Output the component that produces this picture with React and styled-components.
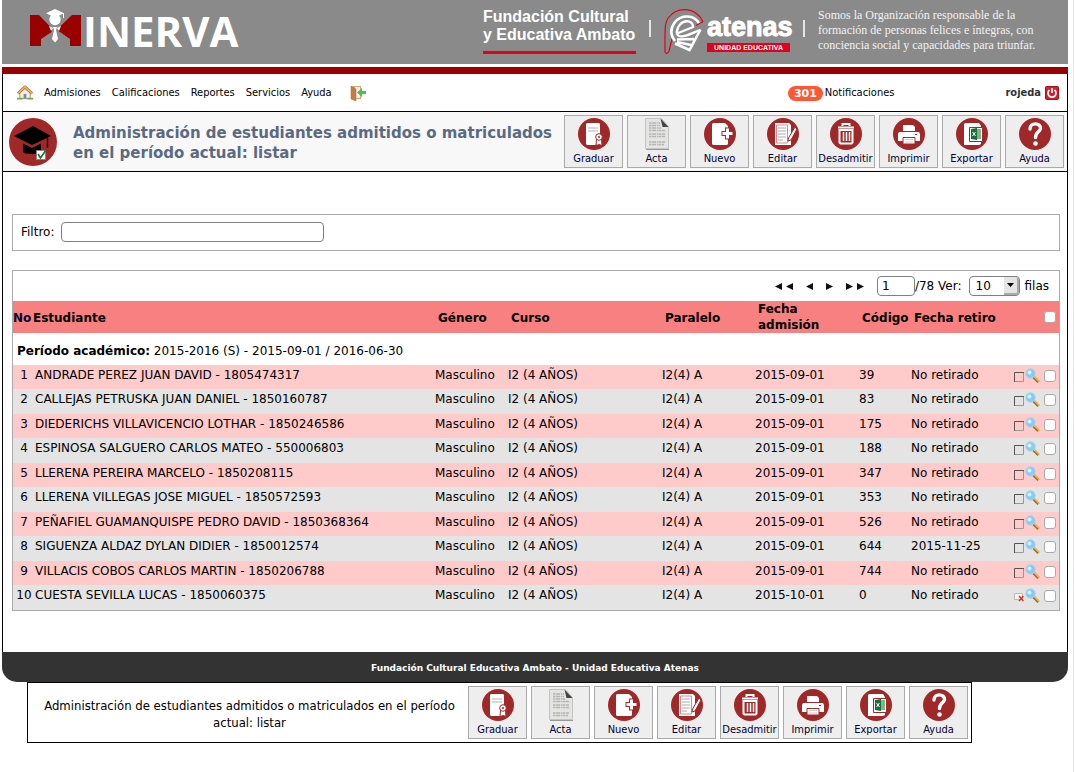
import React from "react";
import styled, { createGlobalStyle } from "styled-components";

const sans = `"DejaVu Sans", Verdana, sans-serif`;
const condensed = `"DejaVu Sans Condensed", Tahoma, sans-serif`;
const grotesk = `"Liberation Sans", Arial, sans-serif`;
const brick = "#a02829";

const GlobalStyle = createGlobalStyle`
  *, *::before, *::after { box-sizing: border-box; }
  body { margin: 0; background: #fff; color: #000; font: 12px/16px ${sans}; }
  button, input, select { font: inherit; color: inherit; margin: 0; }
  a { color: inherit; text-decoration: none; }
  svg { display: block; flex: none; }
`;

const Page = styled.div`
  min-height: 100vh;
  margin-right: 1px;
  padding: 0 5px 0 2px;
  border-right: 1px solid #e6e6e6;
`;

/* ---------- banner ---------- */
const Banner = styled.header`
  display: flex;
  align-items: flex-start;
  height: 64px;
  padding: 8px 0 0 27px;
  background: #8a8a8a;
  color: #fff;
`;
const Brand = styled.div`
  display: flex;
  font: 700 42px/46px "Open Sans", sans-serif;
  gap: 1px;
`;
const Sponsors = styled.div`
  display: flex;
  align-items: flex-start;
  margin-left: auto;
`;
const Foundation = styled.div`
  width: 153px;
  height: 46px;
  border-bottom: 3px solid #e2001a;
  font: 700 16px/18px ${grotesk};
  white-space: nowrap;
`;
const Divider = styled.span`
  width: 2px;
  height: 17px;
  margin: 12px 13px 0;
  background: #e6e6e6;
`;
const Atenas = styled.div`
  display: flex;
  gap: 3px;
`;
const AtenasName = styled.div`
  width: 83px;
  padding-top: 4px;
  font: 700 27px/31px ${grotesk};
  -webkit-text-stroke: 1px #fff;
`;
const AtenasTag = styled.div`
  height: 9px;
  background: #e2001a;
  font: 700 7px/9px ${grotesk};
  text-align: center;
  white-space: nowrap;
  -webkit-text-stroke: 0;
`;
const Motto = styled.p`
  width: 250px;
  margin: 0;
  color: #f2f2f2;
  font: 12px/15px "Liberation Serif", serif;
`;

/* ---------- frame ---------- */
const Frame = styled.div`
  margin-top: 3px;
  border-top: 7px solid #990000;
`;
const FrameBody = styled.div`
  border: solid #000;
  border-width: 0 1px;
`;
const MenuBar = styled.nav`
  display: flex;
  align-items: center;
  height: 38px;
  padding: 1px 8px 0 14px;
  border-bottom: 1px solid #000;
  font: 11px/16px ${condensed};
`;
const MenuLinks = styled.div`
  display: flex;
  align-items: center;
  gap: 11px;
`;
const ExitLink = styled.a`
  margin-left: 7px;
`;
const Notices = styled.a`
  display: flex;
  align-items: center;
  gap: 2px;
  margin-left: auto;
`;
const Count = styled.span`
  width: 35px;
  border-radius: 8px;
  background: #ff5733;
  color: #fff;
  font: 700 11px/15px ${sans};
  text-align: center;
`;
const User = styled.div`
  display: flex;
  align-items: center;
  gap: 4px;
  margin-left: 111px;
  color: #333;
  font: 700 11px/16px ${condensed};
`;

const TitleBar = styled.div`
  display: flex;
  align-items: center;
  height: 60px;
  padding: 0 3px 0 6px;
  border-bottom: 1px solid #000;
  background: #f8f8f8;
`;
const Title = styled.h1`
  flex: 1;
  margin: 0 10px 0 16px;
  padding-top: 2px;
  color: #5b6a82;
  font: 700 15px/20px ${sans};
`;
const Tools = styled.div`
  display: flex;
  gap: 4px;
`;
const ToolButton = styled.button`
  display: flex;
  flex-direction: column;
  align-items: center;
  gap: 2px;
  width: 59px;
  height: 53px;
  padding: 2px 0 0;
  border: 1px solid #aaa;
  background: #eee;
  color: #000033;
  font: 11px/14px ${condensed};
  white-space: nowrap;
`;

/* ---------- content ---------- */
const Content = styled.main`
  padding: 42px 7px 41px 9px;
`;
const FilterBox = styled.div`
  display: flex;
  align-items: center;
  gap: 7px;
  height: 37px;
  margin-bottom: 19px;
  padding: 0 8px 2px;
  border: 1px solid #aaa;
`;
const TextInput = styled.input`
  width: ${(p) => p.$width};
  height: 20px;
  padding: 0 4px;
  border: 1px solid #808080;
  border-radius: 4px;
  background: #fff;
`;
const ListBox = styled.section`
  border: 1px solid #aaa;
`;
const Pager = styled.div`
  display: flex;
  align-items: center;
  justify-content: flex-end;
  height: 30px;
  padding-right: 10px;
`;
const PageButtons = styled.div`
  display: flex;
  gap: 13px;
  margin-right: 13px;
`;
const PageButton = styled.button`
  display: flex;
  gap: 4px;
  padding: 0;
  border: 0;
  background: none;
`;
const SelectWrap = styled.span`
  position: relative;
  margin: 0 5px 0 7px;
`;
const RowsSelect = styled.select`
  appearance: none;
  display: block;
  width: 51px;
  height: 20px;
  padding: 0 6px;
  border: 1px solid #808080;
  border-radius: 4px;
  background: #fff;
`;
const SelectArrow = styled.span`
  position: absolute;
  top: 1px;
  right: 1px;
  display: grid;
  place-items: center;
  width: 15px;
  height: 18px;
  border: solid #aaa;
  border-width: 0 2px 2px 0;
  border-radius: 0 3px 3px 0;
  background: #e4e4e4;
  pointer-events: none;
`;

const Table = styled.table`
  width: 100%;
  table-layout: fixed;
  border-collapse: collapse;
`;
const Col = styled.col`
  width: ${(p) => p.$width};
`;
const HeadRow = styled.tr`
  height: 32px;
  background: #f88080;
`;
const Th = styled.th`
  padding: ${(p) => (p.$lines === 2 ? "0" : "2px")} 0 0 ${(p) => (p.$tight ? "0" : "5px")};
  color: ${(p) => (p.$navy ? "#000033" : "#000")};
  text-align: left;
  vertical-align: middle;
  white-space: nowrap;
`;
const PeriodRow = styled.tr`
  height: 32px;
`;
const PeriodCell = styled.td`
  padding: 4px 4px 0;
`;
const Row = styled.tr`
  height: 24px;
  background: #fecaca;
  &:nth-child(odd) {
    height: 25px;
    background: #e4e4e4;
  }
`;
const Td = styled.td`
  padding: 2px 0 0 2px;
  text-align: ${(p) => (p.$center ? "center" : "left")};
  vertical-align: top;
  white-space: nowrap;
`;
const Actions = styled.div`
  display: flex;
  align-items: center;
  justify-content: flex-end;
  gap: ${(p) => (p.$header ? "0" : "1px")};
  padding-right: 3px;
`;
const Check = styled.input.attrs({ type: "checkbox" })`
  appearance: none;
  width: 12px;
  height: 12px;
  margin: 0 0 0 3px;
  border: 1px solid #aaa;
  border-radius: 3px;
  background: #fff;
`;
const IconLink = styled.a`
  display: block;
`;

/* ---------- footer ---------- */
const Footer = styled.footer`
  height: 30px;
  padding-top: 1px;
  border-radius: 0 0 15px 15px;
  background: #333;
  color: #fff;
  font: 700 9px/30px ${sans};
  text-align: center;
`;
const BottomBar = styled.div`
  display: flex;
  align-items: center;
  height: 61px;
  margin: 0 96px 0 25px;
  padding: 0 3px;
  border: 1px solid #000;
`;
const BottomTitle = styled.div`
  flex: 1;
  padding: 2px 8px 0;
  font: 13px/17px ${condensed};
  text-align: center;
`;

/* ---------- drawings ---------- */
const MinervaMark = () => (
  <svg width="53" height="40" viewBox="0 0 53 40" aria-hidden="true">
    <path d="M1 7h9l12.500 13v4L12 31v7H1zM52 7h-9L29.500 20v3L41 31v7h11z" fill="#990000" />
    <path d="M17 5.200 26 1l9 4.200L26 9.500z" fill="#fff" />
    <circle cx="26" cy="11.500" r="5.700" fill="#fff" />
    <path d="M34.500 5v5" stroke="#fff" />
    <path d="m20 18 4 2-2 3zM32 18l-4 2 2 3z" fill="#fff" />
    <path d="M24 19h4l-1 3 2 9-3 3.500-3-3.500 2-9z" fill="#fff" />
  </svg>
);

const Helmet = () => (
  <svg width="40" height="47" viewBox="0 0 40 47" fill="none" aria-hidden="true">
    <path d="M39 13.500C31-2 13-1 5 9 0 15 1 24 1 43c0 3.500 3 3 4 0l3-12M39 13.500l-7 4" stroke="#e2001a" strokeWidth="1.200" />
    <path d="M35 15C30 7 18 6 11 14c-6 8-4 14 0 19" stroke="#fff" strokeWidth="2.600" />
    <path d="M13 25.500 29 19c0-6-8-8-13-2.500-4 4.500-4 10-1 11.500 5 2 13-3 21-6" stroke="#fff" strokeWidth="2.400" />
    <path d="M36.500 21.500 25.500 42 11 35.500M13 34l14 3M13 31.500l17-.5" stroke="#fff" strokeWidth="2.600" />
  </svg>
);

const HomeIcon = () => (
  <svg width="16" height="16" viewBox="0 0 17 16" aria-hidden="true">
    <path d="M3 8 8.500 3 14 8v6H3z" fill="#f4efe4" stroke="#999" />
    <path d="M1 8.500 8.500 1.500 16 8.500" fill="none" stroke="#b36b2a" strokeWidth="3" strokeLinejoin="round" />
    <path d="M1 8.500 8.500 1.500 16 8.500" fill="none" stroke="#f0b565" strokeWidth="1.600" />
    <path d="M7 9h3v5H7z" fill="#7c8997" />
    <path d="M0 13h6v2H0zM11 13h6v2h-6z" fill="#6fae45" />
  </svg>
);

const DoorIcon = () => (
  <svg width="17" height="17" viewBox="0 0 17 17" aria-hidden="true">
    <path d="M1 1h10v13H1z" fill="#d9a67c" />
    <path d="M5 2h5v11H5z" fill="#f2f2f2" />
    <path d="m1 1 5 3v12l-5-2z" fill="#c97c42" stroke="#b56c38" strokeWidth=".5" />
    <path d="M7 7.500 12 3v3h4v3h-4v3z" fill="#4cc04a" />
  </svg>
);

const PowerIcon = () => (
  <svg width="14" height="14" viewBox="0 0 14 14" fill="none" aria-hidden="true">
    <rect x=".5" y=".5" width="13" height="13" rx="1" fill="#d31f2c" stroke="#a80f1a" />
    <path d="M4.500 4a4 4 0 1 0 5 0M7 2v5" stroke="#fff" strokeWidth="1.700" />
  </svg>
);

const StudentIcon = () => (
  <svg width="48" height="48" viewBox="0 0 48 48" aria-hidden="true">
    <circle cx="24" cy="24" r="24" fill={brick} />
    <path d="M5 18 24 8l18 10-19 9z" fill="#000" />
    <path d="M14 25.500 23 30l9-4.500V36H23c-5 0-9-1-9-2z" fill="#000" />
    <path d="M38.500 20v10" stroke="#300" strokeWidth="1.500" />
    <path d="M27.500 32.500h9v9h-9z" fill="#fff" stroke="#888" />
    <path d="m29 36 2.500 4 5.500-8" fill="none" stroke="#16753a" strokeWidth="1.700" />
  </svg>
);

const toolArt = {
  Graduar: (
    <>
      <path d="M9 5h12l1 1v20l-1 1H9l-1-1V6z" fill="#fff" />
      <path d="M10 10h10M10 13h10" stroke="#ccc" strokeWidth="1.400" />
      <path d="m18.500 21-.5 6.500 3-1 3 1-.5-6.500z" fill="#fff" stroke={brick} />
      <circle cx="21" cy="19" r="3.300" fill="#fff" stroke={brick} />
      <circle cx="21" cy="19" r="1" fill={brick} />
    </>
  ),
  Nuevo: (
    <>
      <path d="M9 5h12l3 3v18l-1 1H9l-1-1V6z" fill="#fff" />
      <path d="M23.500 9.500v12M17.500 15.500h12" stroke={brick} strokeWidth="5" />
      <path d="M23.500 10.500v10M18.500 15.500h10" stroke="#fff" strokeWidth="3" />
    </>
  ),
  Editar: (
    <>
      <path d="M8 5h14l2 2v20H8z" fill="#fff" />
      <path d="M9.500 7h11v18h-11z" fill="none" stroke="#d88" />
      <path d="M11 10h8M11 13h8M11 16h8M11 19h8M11 22h5" stroke="#aaa" />
      <path d="m28 9-6.500 11-.5 3 3-1L30 11z" fill="#fff" stroke={brick} />
    </>
  ),
  Desadmitir: (
    <g fill="none" stroke="#fff" strokeWidth="2">
      <path d="M12.500 8V6h7v2M8 9.500h16" />
      <path d="M9.500 12h13v12.500l-1 1h-11l-1-1z" />
      <path d="M13.500 14v9M16.500 14v9M19.500 14v9" strokeWidth="1.500" />
    </g>
  ),
  Imprimir: (
    <>
      <path d="M10 7h10l2 2v4H10z" fill="#fff" />
      <path d="M6 14h20l1 2v7H5v-7z" fill="#fff" />
      <path d="M10 19.500h12V26H10z" fill="#fff" stroke={brick} />
      <path d="M12 21.500h8M12 24h8" stroke="#ccc" />
      <path d="M22 16.500h2" stroke={brick} />
    </>
  ),
  Exportar: (
    <>
      <path d="M9 5h14l2 3v18l-2 1H8V6z" fill="#fff" />
      <path d="M13.500 9.500h13v14h-13z" fill="#fff" stroke={brick} />
      <path d="M20 11h5v10h-5z" fill="#7db58c" />
      <path d="m15 11 6-1v12l-6-1z" fill="#17703a" />
      <path d="m16.500 14 3 4M19.500 14l-3 4" stroke="#fff" />
    </>
  ),
  Ayuda: (
    <>
      <path d="M11 11c0-7 11-6.500 10.500-.500C21 14 16.500 14 16.500 19.500" fill="none" stroke="#fff" strokeWidth="3.400" strokeLinecap="round" />
      <circle cx="16.500" cy="25.500" r="2.300" fill="#fff" />
    </>
  ),
};

const PaperIcon = () => (
  <svg width="32" height="32" viewBox="0 0 32 32" aria-hidden="true">
    <path d="M4.500.500h16l7 8v22h-23z" fill="#e4e4e2" stroke="#c4c4c4" />
    <path d="M5 31.500h23" stroke="#999" />
    <path d="M19.500.500l8 8.500h-6z" fill="#444" />
    <path
      d="M8 5h11M8 7.500h11M8 10h12M8 12.500h16M8 16h16M8 18.500h16M8 24h16M8 26.500h15"
      stroke="#b4b4b4"
      strokeWidth="1.400"
      strokeDasharray="2.500 .6 4 .8 1.500 .5"
    />
  </svg>
);

const ToolIcon = ({ name }) =>
  name === "Acta" ? (
    <PaperIcon />
  ) : (
    <svg width="32" height="32" viewBox="0 0 32 32" aria-hidden="true">
      <circle cx="16" cy="16" r="16" fill={brick} />
      {toolArt[name]}
    </svg>
  );

const Triangle = ({ back }) => (
  <svg width="7" height="7" viewBox="0 0 7 7" aria-hidden="true">
    <path d={back ? "M7 0v7L0 3.500z" : "M0 0v7l7-3.500z"} fill="#111" />
  </svg>
);

const StateIcon = ({ removed }) => (
  <svg width="10" height="14" viewBox="0 0 10 14" fill="none" aria-hidden="true">
    {removed ? (
      <>
        <path d="M.5 4.500h8v6h-8z" fill="#f4f4f4" stroke="#bbb" />
        <path d="m5 7 4.500 5M9.500 7 5 12" stroke="#e03020" strokeWidth="1.500" />
      </>
    ) : (
      <>
        <path d="M9.500 3v9.500H0" stroke="#999" />
        <path d="M.5 13V3.500H10" stroke="#555" />
      </>
    )}
  </svg>
);

const LensIcon = () => (
  <svg width="15" height="17" viewBox="0 0 15 17" fill="none" aria-hidden="true">
    <path d="m8.500 10 5 5" stroke="#99712c" strokeWidth="3" />
    <path d="m9 9.500 5 5" stroke="#f3b74f" strokeWidth="1.300" />
    <circle cx="5.500" cy="6.500" r="4.700" fill="#7fcdfa" stroke="#b5cfe4" />
    <circle cx="4.500" cy="5.500" r="2" fill="#d5f2ff" />
  </svg>
);

/* ---------- data ---------- */
const tools = ["Graduar", "Acta", "Nuevo", "Editar", "Desadmitir", "Imprimir", "Exportar", "Ayuda"];
const menu = ["Admisiones", "Calificaciones", "Reportes", "Servicios", "Ayuda"];
const widths = ["20px", "auto", "73px", "154px", "93px", "104px", "52px", "102px", "48px"];
const students = [
  ["ANDRADE PEREZ JUAN DAVID - 1805474317", "2015-09-01", "39", "No retirado"],
  ["CALLEJAS PETRUSKA JUAN DANIEL - 1850160787", "2015-09-01", "83", "No retirado"],
  ["DIEDERICHS VILLAVICENCIO LOTHAR - 1850246586", "2015-09-01", "175", "No retirado"],
  ["ESPINOSA SALGUERO CARLOS MATEO - 550006803", "2015-09-01", "188", "No retirado"],
  ["LLERENA PEREIRA MARCELO - 1850208115", "2015-09-01", "347", "No retirado"],
  ["LLERENA VILLEGAS JOSE MIGUEL - 1850572593", "2015-09-01", "353", "No retirado"],
  ["PEÑAFIEL GUAMANQUISPE PEDRO DAVID - 1850368364", "2015-09-01", "526", "No retirado"],
  ["SIGUENZA ALDAZ DYLAN DIDIER - 1850012574", "2015-09-01", "644", "2015-11-25"],
  ["VILLACIS COBOS CARLOS MARTIN - 1850206788", "2015-09-01", "744", "No retirado"],
  ["CUESTA SEVILLA LUCAS - 1850060375", "2015-10-01", "0", "No retirado"],
];

const Toolbar = () => (
  <Tools>
    {tools.map((name) => (
      <ToolButton key={name} type="button">
        <ToolIcon name={name} />
        {name}
      </ToolButton>
    ))}
  </Tools>
);

const StudentTable = () => (
  <Table>
    <colgroup>
      {widths.map((w, i) => (
        <Col key={i} $width={w} />
      ))}
    </colgroup>
    <thead>
      <HeadRow>
        <Th $tight $navy>No</Th>
        <Th $tight>Estudiante</Th>
        <Th>Género</Th>
        <Th>Curso</Th>
        <Th>Paralelo</Th>
        <Th $lines={2}>
          Fecha
          <br />
          admisión
        </Th>
        <Th>Código</Th>
        <Th>Fecha retiro</Th>
        <Th $lines={2}>
          <Actions $header>
            <Check aria-label="Seleccionar todos" />
          </Actions>
        </Th>
      </HeadRow>
    </thead>
    <tbody>
      <PeriodRow>
        <PeriodCell colSpan={9}>
          <b>Período académico:</b> 2015-2016 (S) - 2015-09-01 / 2016-06-30
        </PeriodCell>
      </PeriodRow>
      {students.map(([name, admitted, code, left], i) => (
        <Row key={name}>
          <Td $center>{i + 1}</Td>
          <Td>{name}</Td>
          <Td>Masculino</Td>
          <Td>I2 (4 AÑOS)</Td>
          <Td>I2(4) A</Td>
          <Td>{admitted}</Td>
          <Td>{code}</Td>
          <Td>{left}</Td>
          <Td>
            <Actions>
              <StateIcon removed={code === "0"} />
              <IconLink href="#ver" aria-label={`Ver ${name}`}>
                <LensIcon />
              </IconLink>
              <Check aria-label={`Seleccionar ${name}`} />
            </Actions>
          </Td>
        </Row>
      ))}
    </tbody>
  </Table>
);

export default function App() {
  return (
    <Page>
      <GlobalStyle />
      <Banner>
        <Brand>
          <MinervaMark />
          INERVA
        </Brand>
        <Sponsors>
          <Foundation>
            Fundación Cultural
            <br />y Educativa Ambato
          </Foundation>
          <Divider />
          <Atenas>
            <Helmet />
            <AtenasName>
              atenas
              <AtenasTag>UNIDAD EDUCATIVA</AtenasTag>
            </AtenasName>
          </Atenas>
          <Divider />
          <Motto>
            Somos la Organización responsable de la
            <br />
            formación de personas felices e íntegras, con
            <br />
            conciencia social y capacidades para triunfar.
          </Motto>
        </Sponsors>
      </Banner>

      <Frame>
        <FrameBody>
          <MenuBar>
            <MenuLinks>
              <a href="#inicio" aria-label="Inicio">
                <HomeIcon />
              </a>
              {menu.map((item) => (
                <a key={item} href={`#${item}`}>
                  {item}
                </a>
              ))}
              <ExitLink href="#salir" aria-label="Salir">
                <DoorIcon />
              </ExitLink>
            </MenuLinks>
            <Notices href="#notificaciones">
              <Count>301</Count>
              Notificaciones
            </Notices>
            <User>
              rojeda
              <a href="#cerrar" aria-label="Cerrar sesión">
                <PowerIcon />
              </a>
            </User>
          </MenuBar>

          <TitleBar>
            <StudentIcon />
            <Title>Administración de estudiantes admitidos o matriculados en el período actual: listar</Title>
            <Toolbar />
          </TitleBar>

          <Content>
            <FilterBox>
              <label htmlFor="filtro">Filtro:</label>
              <TextInput id="filtro" type="text" $width="263px" />
            </FilterBox>

            <ListBox>
              <Pager>
                <PageButtons>
                  <PageButton type="button" aria-label="Primera página">
                    <Triangle back />
                    <Triangle back />
                  </PageButton>
                  <PageButton type="button" aria-label="Página anterior">
                    <Triangle back />
                  </PageButton>
                  <PageButton type="button" aria-label="Página siguiente">
                    <Triangle />
                  </PageButton>
                  <PageButton type="button" aria-label="Última página">
                    <Triangle />
                    <Triangle />
                  </PageButton>
                </PageButtons>
                <TextInput type="text" aria-label="Página" defaultValue="1" $width="38px" />
                <label htmlFor="filas">/78 Ver:</label>
                <SelectWrap>
                  <RowsSelect id="filas" defaultValue="10">
                    <option>10</option>
                    <option>20</option>
                    <option>50</option>
                  </RowsSelect>
                  <SelectArrow>
                    <svg width="7" height="4" viewBox="0 0 7 4" aria-hidden="true">
                      <path d="M0 0h7L3.500 4z" fill="#000" />
                    </svg>
                  </SelectArrow>
                </SelectWrap>
                filas
              </Pager>
              <StudentTable />
            </ListBox>
          </Content>
        </FrameBody>
        <Footer>Fundación Cultural Educativa Ambato - Unidad Educativa Atenas</Footer>
      </Frame>

      <BottomBar>
        <BottomTitle>Administración de estudiantes admitidos o matriculados en el período actual: listar</BottomTitle>
        <Toolbar />
      </BottomBar>
    </Page>
  );
}
